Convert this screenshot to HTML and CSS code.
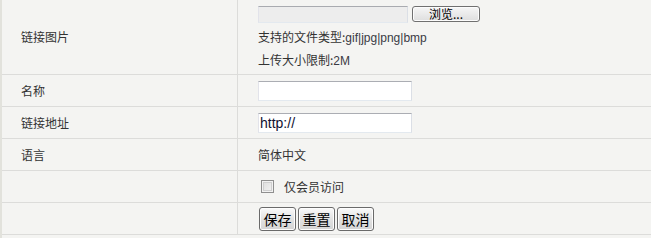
FILE: index.html
```html
<!DOCTYPE html>
<html lang="zh-CN">
<head>
<meta charset="utf-8">
<title>链接</title>
<link rel="stylesheet" href="styles.css">
</head>
<body>
<div class="form">
  <div class="row row-pic">
    <div class="label">链接图片</div>
    <div class="field field-pic">
      <div class="file-line">
        <span class="file-box"></span>
        <button class="browse" type="button">浏览...</button>
      </div>
      <div class="note">支持的文件类型:<span class="latin">gif|jpg|png|bmp</span></div>
      <div class="note">上传大小限制:<span class="latin">2M</span></div>
    </div>
  </div>
  <div class="row">
    <div class="label">名称</div>
    <div class="field"><input class="text" type="text" value=""></div>
  </div>
  <div class="row">
    <div class="label">链接地址</div>
    <div class="field"><input class="text" type="text" value="http://"></div>
  </div>
  <div class="row">
    <div class="label">语言</div>
    <div class="field"><span class="plain">简体中文</span></div>
  </div>
  <div class="row">
    <div class="label"></div>
    <div class="field"><label class="check"><input class="box" type="checkbox"><span>仅会员访问</span></label></div>
  </div>
  <div class="row">
    <div class="label"></div>
    <div class="field field-btns">
      <button class="btn" type="button">保存</button>
      <button class="btn" type="button">重置</button>
      <button class="btn" type="button">取消</button>
    </div>
  </div>
</div>
</body>
</html>
```

FILE: styles.css
```css
html, body {
  margin: 0;
  padding: 0;
  background: #f4f4f2;
}
body {
  width: 651px;
  height: 238px;
  overflow: hidden;
  font-family: "Noto Sans CJK SC", "Liberation Sans", sans-serif;
  font-size: 12px;
  color: #333;
}
.form {
  border-left: 2px solid #e2e2dc;
  height: 238px;
  box-sizing: border-box;
}
.row {
  display: grid;
  grid-template-columns: 236px 1fr;
  height: 31px;
  border-bottom: 1px solid #dcdcda;
}
.row-pic {
  height: 74px;
}
.label {
  border-right: 1px solid #dcdcda;
  padding-left: 19px;
  display: flex;
  align-items: center;
  line-height: 14px;
}
.field {
  padding-left: 20px;
  display: flex;
  align-items: center;
}
.field-pic {
  flex-direction: column;
  align-items: flex-start;
  justify-content: flex-start;
  padding-top: 5px;
  box-sizing: border-box;
}
.file-line {
  display: flex;
  align-items: center;
  height: 18px;
  margin-bottom: 2px;
}
.file-box {
  display: block;
  width: 148px;
  height: 15px;
  background: #ededed;
  border: 1px solid;
  border-color: #a9abb0 #dbdfe6 #e3e9ef #e2e3ea;
}
.browse {
  margin-left: 4px;
  width: 68px;
  height: 16px;
  padding: 0;
  font-family: "Noto Sans CJK SC", sans-serif;
  font-size: 12px;
  line-height: 14px;
  color: #000;
  border: 1px solid #707070;
  border-radius: 3px;
  background: linear-gradient(#f6f6f6, #dedede);
  box-shadow: inset 0 0 0 1px #fcfcfc;
}
.note {
  line-height: 23px;
  height: 23px;
}
.latin {
  font-family: "Liberation Sans", Arial, sans-serif;
  color: #3a3a44;
}
.text {
  width: 151px;
  height: 18px;
  box-sizing: content-box;
  margin: 0;
  padding: 0 0 0 1px;
  border: 1px solid;
  border-color: #abadb3 #dbdfe6 #e3e9ef #e2e3ea;
  background: #fff;
  font-family: "Liberation Sans", Arial, sans-serif;
  font-size: 14px;
  color: #101030;
  outline: none;
}
.plain {
  font-size: 12px;
}
.check {
  display: flex;
  align-items: center;
}
.box {
  appearance: none;
  -webkit-appearance: none;
  margin: 0 10px 0 3px;
  width: 13px;
  height: 13px;
  border: 1px solid #8f8f8f;
  background: linear-gradient(135deg, #dcdcdc, #f4f4f4);
  box-shadow: inset 0 0 0 1px #f2f2f2, inset 0 0 0 2px #cfcfcf;
  box-sizing: border-box;
}
.field-btns {
  gap: 2px;
  padding-left: 21px;
}
.btn {
  height: 24px;
  width: 37px;
  padding: 0;
  margin: 0;
  font-family: "Noto Sans CJK SC", sans-serif;
  font-size: 14px;
  line-height: 20px;
  color: #000;
  border: 1px solid #6a6a6a;
  border-radius: 3px;
  background: linear-gradient(#fafafa, #e2e2e2 50%, #d4d4d4);
  box-shadow: inset 0 0 0 1px #fdfdfd;
}
```
